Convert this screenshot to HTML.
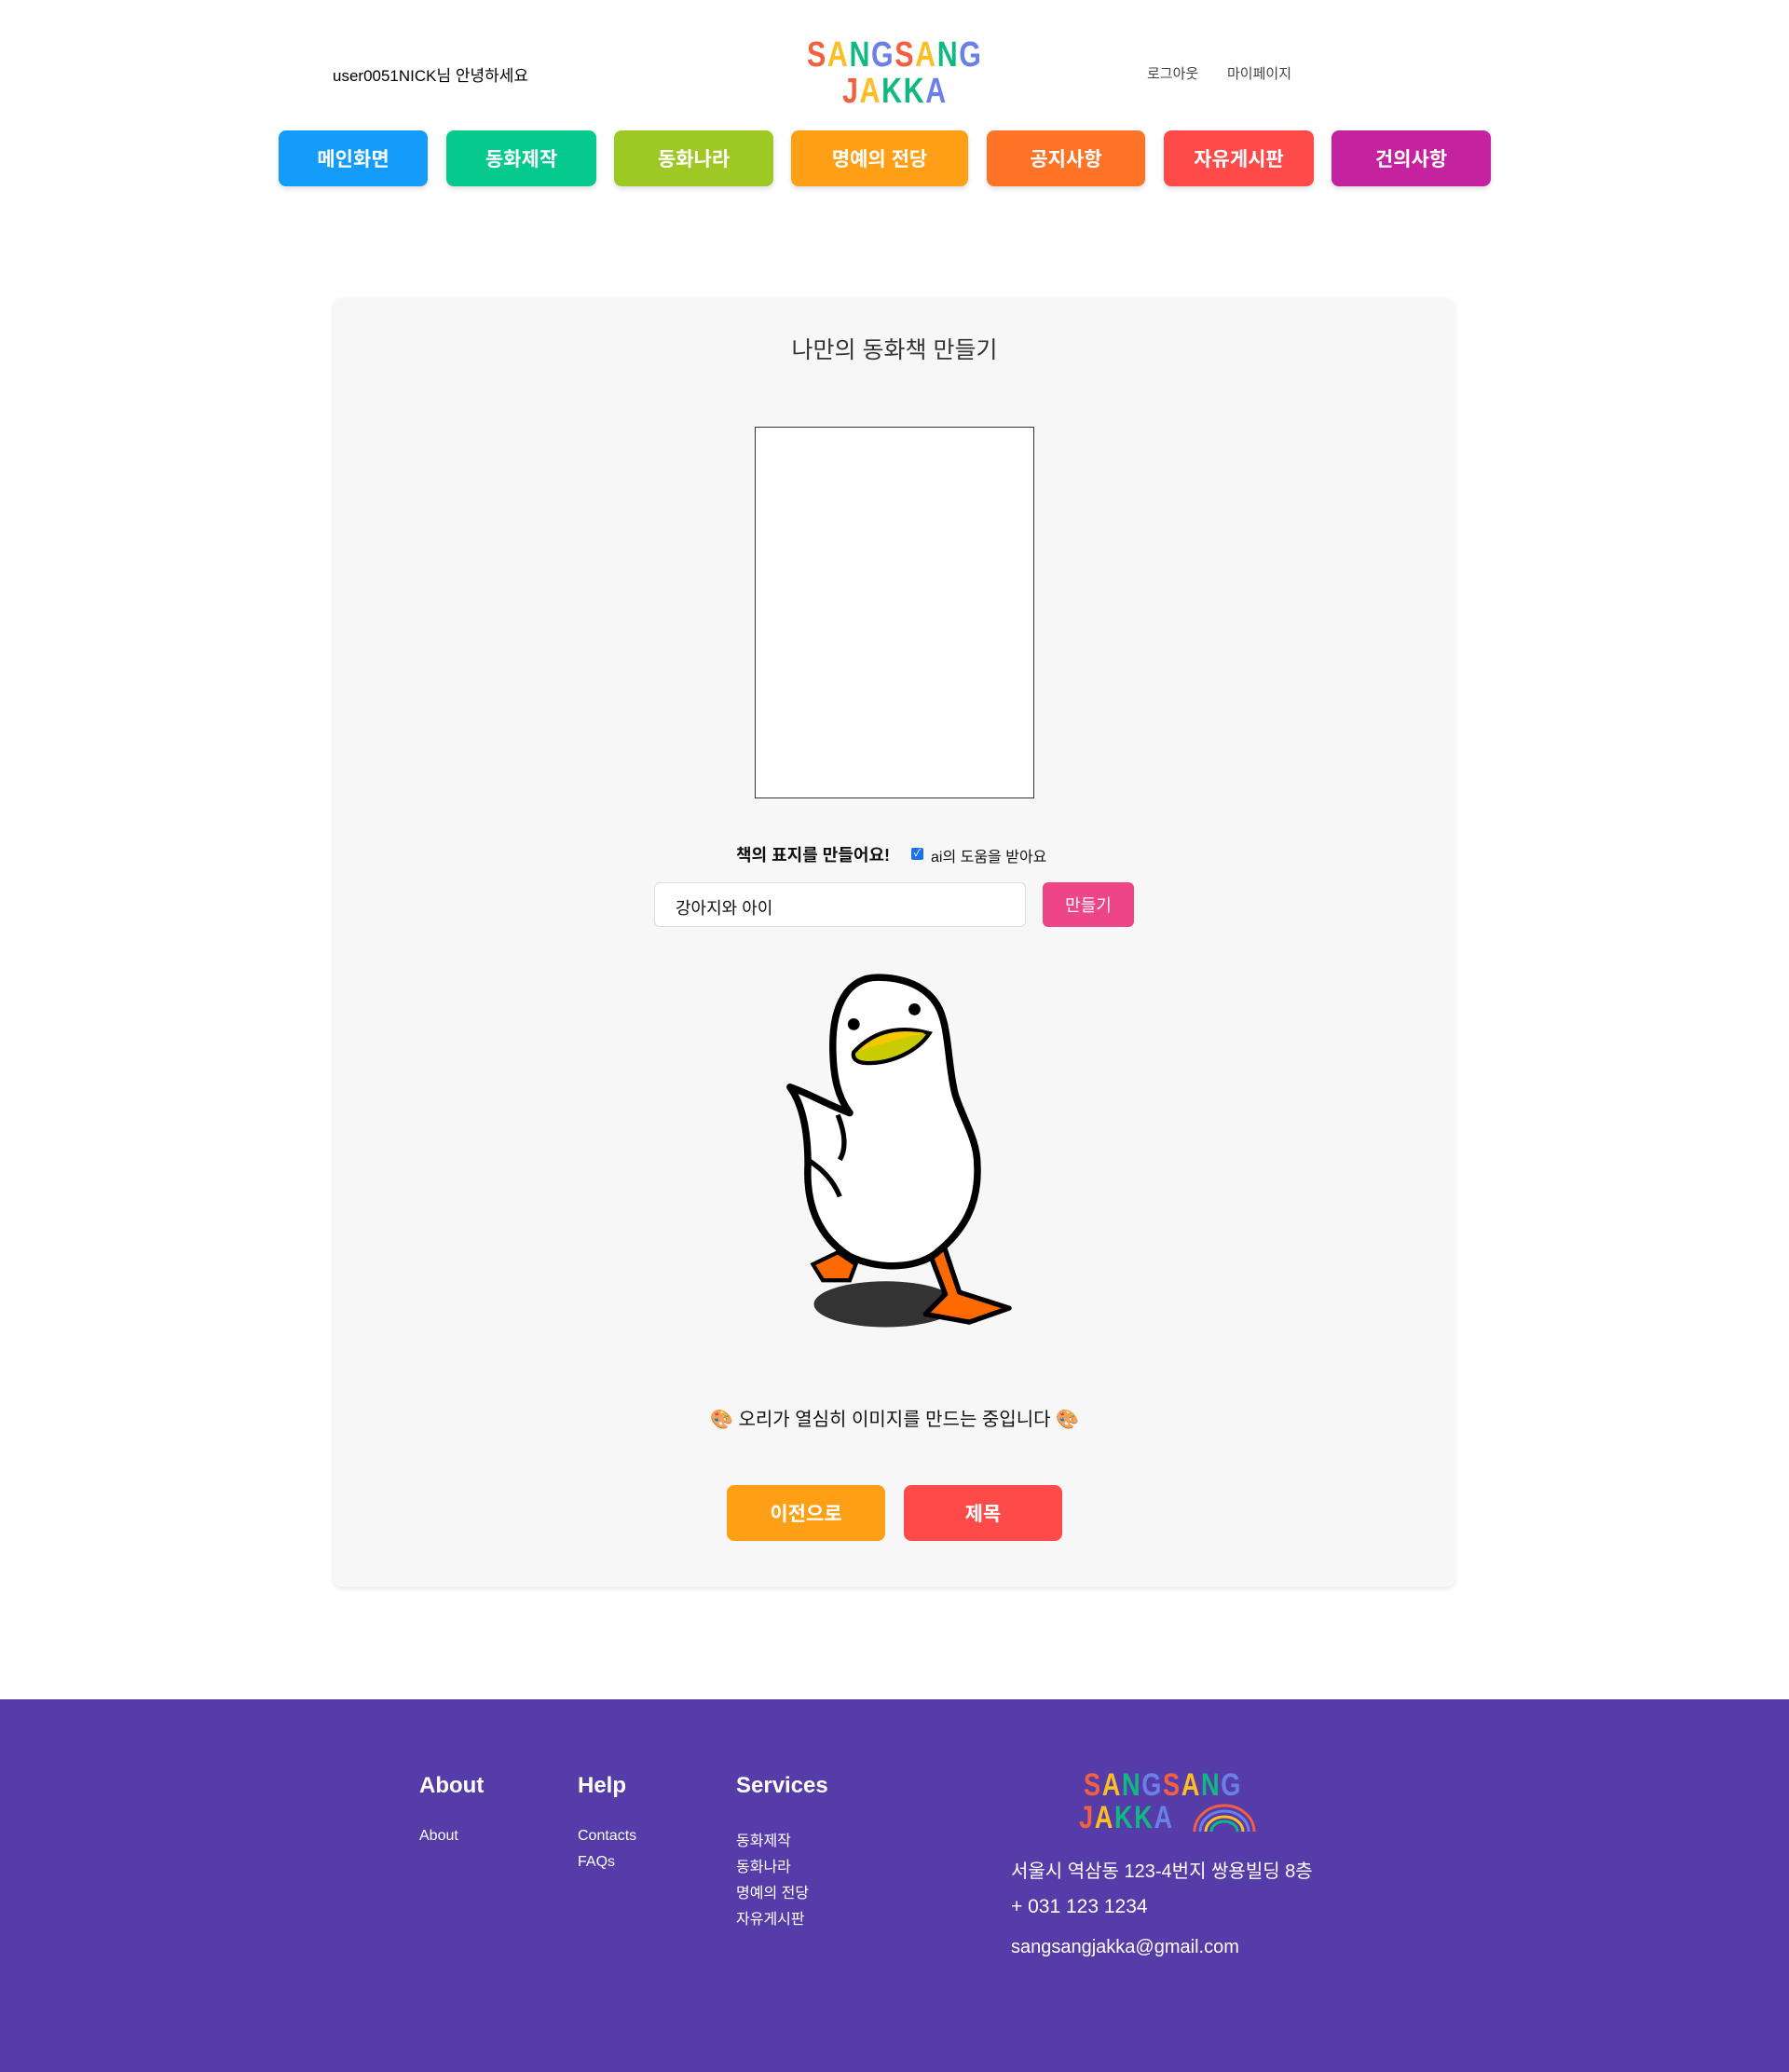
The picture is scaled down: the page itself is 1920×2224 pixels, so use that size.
<!DOCTYPE html>
<html><head><meta charset="utf-8"><style>
*{margin:0;padding:0;box-sizing:border-box}
body{width:1920px;height:2224px;background:#fff;font-family:"Liberation Sans","Noto Sans CJK KR",sans-serif;position:relative;overflow:hidden;color:#111}
.a{position:absolute}
.logo{font-family:"Liberation Sans",sans-serif;font-weight:bold;letter-spacing:2px;line-height:1;transform:scaleX(0.8);transform-origin:0 0}
.o{color:#f26040}.y{color:#fbbf24}.g{color:#10b981}.b{color:#6b7fe8}
.nav{position:absolute;top:140px;height:60px;border-radius:8px;color:#fff;font-weight:bold;font-size:21px;display:flex;align-items:center;justify-content:center;box-shadow:0 3px 6px rgba(0,0,0,.12)}
.btn{position:absolute;color:#fff;font-weight:bold;display:flex;align-items:center;justify-content:center;border-radius:8px}
.fh{position:absolute;top:1903px;color:#fff;font-weight:bold;font-size:24px}
.fl{position:absolute;color:#fff;font-size:16px}
</style></head><body>
<div class="a" style="left:357px;top:67px;font-size:17px;color:#000">user0051NICK님 안녕하세요</div>
<div class="a logo" style="left:866px;top:40px;font-size:38px"><span class="o">S</span><span class="y">A</span><span class="g">N</span><span class="b">G</span><span class="o">S</span><span class="y">A</span><span class="g">N</span><span class="b">G</span></div>
<div class="a logo" style="left:904px;top:79px;font-size:38px"><span class="o">J</span><span class="y">A</span><span class="g">K</span><span class="g">K</span><span class="b">A</span></div>
<div class="a" style="left:1231px;top:68px;font-size:15px;color:#444">로그아웃</div>
<div class="a" style="left:1317px;top:68px;font-size:15px;color:#444">마이페이지</div>

<div class="nav" style="left:299px;width:160px;background:#139cf9">메인화면</div>
<div class="nav" style="left:479px;width:161px;background:#06c98e">동화제작</div>
<div class="nav" style="left:659px;width:171px;background:#9ec824">동화나라</div>
<div class="nav" style="left:849px;width:190px;background:#ff9f15">명예의 전당</div>
<div class="nav" style="left:1059px;width:170px;background:#ff7326">공지사항</div>
<div class="nav" style="left:1249px;width:161px;background:#ff4a4a">자유게시판</div>
<div class="nav" style="left:1429px;width:171px;background:#c4229f">건의사항</div>

<div class="a" style="left:358px;top:320px;width:1203px;height:1383px;background:#f7f7f7;border-radius:8px;box-shadow:0 2px 6px rgba(0,0,0,.1)"></div>
<div class="a" style="left:0;width:1920px;top:356px;text-align:center;font-size:25px;color:#333">나만의 동화책 만들기</div>
<div class="a" style="left:810px;top:458px;width:300px;height:399px;background:#fff;border:1px solid #333"></div>
<div class="a" style="left:790px;top:904px;font-size:18px;font-weight:bold;color:#111">책의 표지를 만들어요!</div>
<div class="a" style="left:978px;top:910px;width:13px;height:13px;background:#1a73e8;border-radius:2px;color:#fff;font-size:11px;line-height:13px;text-align:center">✓</div>
<div class="a" style="left:999px;top:906px;font-size:16px;color:#111">ai의 도움을 받아요</div>
<div class="a" style="left:702px;top:947px;width:399px;height:48px;background:#fff;border:1px solid #ddd;border-radius:6px;font-size:18px;padding:13px 22px">강아지와 아이</div>
<div class="btn" style="left:1119px;top:947px;width:98px;height:48px;background:#ee4488;font-size:18px;font-weight:normal;border-radius:6px">만들기</div>

<svg class="a" style="left:835px;top:1036px" width="278" height="439" viewBox="0 0 260 410">
<ellipse cx="108" cy="340" rx="72" ry="23" fill="#333"/>
<polygon points="35,300 60,288 78,300 72,316 45,316" fill="#ff6a00" stroke="#000" stroke-width="4"/>
<polygon points="150,283 166,280 182,328 232,344 192,358 148,350 168,330" fill="#ff6a00" stroke="#000" stroke-width="5" stroke-linejoin="round"/>
<path d="M100,12 C70,12 55,40 55,80 C55,112 60,132 72,148 C50,140 30,128 12,122 C25,140 30,168 30,200 C28,240 40,272 72,292 C102,306 142,305 162,286 C186,266 202,240 200,200 C200,175 186,155 178,130 C170,100 172,60 160,40 C148,20 125,12 100,12 Z" fill="#fff" stroke="#000" stroke-width="7" stroke-linejoin="round"/>
<path d="M60,150 C68,170 68,185 62,195 M30,195 C45,205 55,215 62,232" fill="none" stroke="#000" stroke-width="5"/>
<path d="M76,87 C92,70 115,58 152,68 C140,86 115,98 90,98 C80,98 74,94 76,87 Z" fill="#c8cc00" stroke="#000" stroke-width="4"/>
<path d="M80,86 C95,72 115,62 148,68 C125,72 100,80 80,86 Z" fill="#f5c800"/>
<circle cx="76" cy="59" r="6" fill="#000"/><circle cx="137" cy="44" r="6" fill="#000"/>
</svg>

<div class="a" style="left:0;width:1920px;top:1507px;text-align:center;font-size:20px;color:#111">🎨 오리가 열심히 이미지를 만드는 중입니다 🎨</div>
<div class="btn" style="left:780px;top:1594px;width:170px;height:60px;background:#ff9f15;font-size:21px">이전으로</div>
<div class="btn" style="left:970px;top:1594px;width:170px;height:60px;background:#ff4a4a;font-size:21px">제목</div>

<div class="a" style="left:0;top:1824px;width:1920px;height:400px;background:#553ca8"></div>
<div class="fh" style="left:450px">About</div>
<div class="fh" style="left:620px">Help</div>
<div class="fh" style="left:790px">Services</div>
<div class="fl" style="left:450px;top:1962px">About</div>
<div class="fl" style="left:620px;top:1962px">Contacts</div>
<div class="fl" style="left:620px;top:1990px">FAQs</div>
<div class="fl" style="left:790px;top:1962px">동화제작</div>
<div class="fl" style="left:790px;top:1990px">동화나라</div>
<div class="fl" style="left:790px;top:2018px">명예의 전당</div>
<div class="fl" style="left:790px;top:2046px">자유게시판</div>
<div class="a logo" style="left:1163px;top:1899px;font-size:34px"><span class="o">S</span><span class="y">A</span><span class="g">N</span><span class="b">G</span><span class="o">S</span><span class="y">A</span><span class="g">N</span><span class="b">G</span></div>
<div class="a logo" style="left:1158px;top:1934px;font-size:34px"><span class="o">J</span><span class="y">A</span><span class="g">K</span><span class="g">K</span><span class="b">A</span></div>
<svg class="a" style="left:1278px;top:1934px" width="72" height="34" viewBox="0 0 72 34">
<path d="M4,32 A32,28 0 0 1 68,32" fill="none" stroke="#f26040" stroke-width="3"/>
<path d="M10,32 A26,22 0 0 1 62,32" fill="none" stroke="#6b7fe8" stroke-width="3"/>
<path d="M16,32 A20,16 0 0 1 56,32" fill="none" stroke="#fbbf24" stroke-width="3"/>
<path d="M22,32 A14,11 0 0 1 50,32" fill="none" stroke="#10b981" stroke-width="3"/>
</svg>
<div class="fl" style="left:1085px;top:1992px;font-size:20px">서울시 역삼동 123-4번지 쌍용빌딩 8층</div>
<div class="fl" style="left:1085px;top:2035px;font-size:21px">+ 031 123 1234</div>
<div class="fl" style="left:1085px;top:2079px;font-size:20px">sangsangjakka@gmail.com</div>
</body></html>
